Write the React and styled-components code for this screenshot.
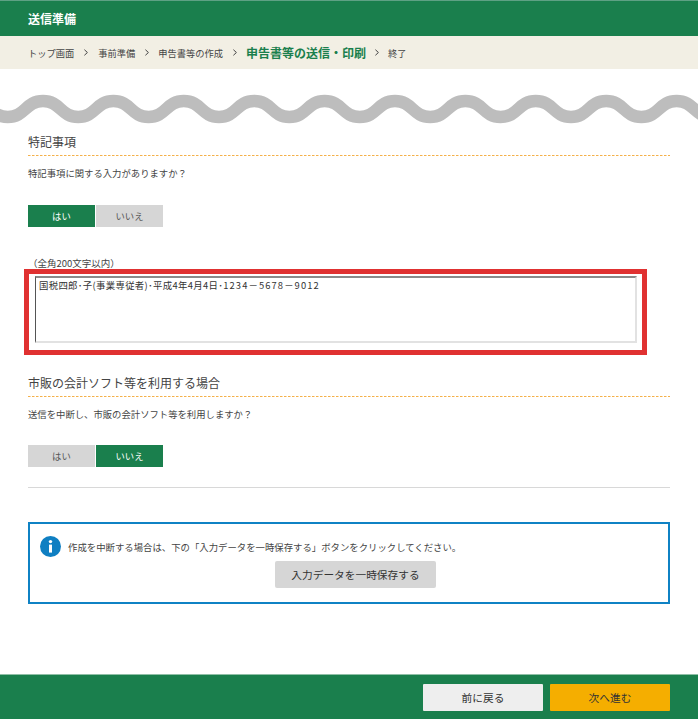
import React from "react";
import styled, { createGlobalStyle } from "styled-components";

const Global = createGlobalStyle`
  html, body { margin: 0; padding: 0; background: #fff; }
  body { font-family: "Noto Sans CJK JP", "Liberation Sans", sans-serif; color: #333; }
  * { box-sizing: border-box; }
`;

const Page = styled.div`
  width: 698px;
  height: 719px;
  display: flex;
  flex-direction: column;
  overflow: hidden;
`;
const Header = styled.header`
  height: 36px;
  flex: none;
  background: #1a7f4d;
  border-top: 1px solid #5ea184;
  padding-left: 28px;
  display: flex;
  align-items: center;
  color: #fff;
  font-size: 12px;
  font-weight: 700;
`;
const Crumbs = styled.nav`
  height: 33px;
  flex: none;
  background: #f2efe4;
  padding-left: 28px;
  display: flex;
  align-items: center;
  color: #444;
`;
const Crumb = styled.span`
  color: ${(p) => (p.$current ? "#1a7f4d" : "#444")};
  font-size: ${(p) => (p.$current ? "12px" : "9.25px")};
  font-weight: ${(p) => (p.$current ? 700 : 400)};
`;
const Sep = styled.svg`
  width: 4px;
  height: 7px;
  margin: 0 ${(p) => p.$gap}px;
  flex: none;
`;
const Wave = styled.svg`
  display: block;
  flex: none;
  width: 698px;
  height: 32px;
  margin-top: 24px;
`;
const Main = styled.main`
  flex: 1;
  padding: 7px 28px 0;
`;
const Heading = styled.h2`
  margin: 0;
  padding-top: 1px;
  font-size: 12px;
  font-weight: 400;
  line-height: 18px;
  height: 24px;
  color: #444;
  width: 642px;
  background: repeating-linear-gradient(90deg, #f4b04a 0 2px, #fbd9a4 2px 3px, #ffffff 3px 4px) left bottom / 100% 1px no-repeat;
`;
const Question = styled.p`
  margin: 10px 0 0;
  font-size: 9.35px;
  line-height: 14px;
  color: #444;
`;
const Toggle = styled.div`
  display: flex;
  gap: 1px;
  margin-top: ${(p) => p.$top}px;
`;
const ToggleButton = styled.button`
  width: 67px;
  height: 22px;
  padding: 0;
  border: 0;
  font: inherit;
  font-size: 9.4px;
  background: ${(p) => (p.$on ? "#1a7f4d" : "#d6d6d6")};
  color: ${(p) => (p.$on ? "#fff" : "#555")};
`;
const Limit = styled.div`
  margin-top: 30px;
  font-size: 9.5px;
  line-height: 12px;
  color: #444;
`;
const Highlight = styled.div`
  margin-left: -4px;
  width: 623px;
  height: 86px;
  border: 5px solid #e03131;
  padding: 2px 5px 7px 6px;
`;
const Memo = styled.div`
  width: 602px;
  height: 67px;
  border-style: solid;
  border-width: 2px 2px 2px 1px;
  border-color: #8a8a8a #e2e2e2 #e2e2e2 #555;
  padding: 1px 3px;
  font-size: 9.4px;
  line-height: 13px;
  letter-spacing: 0.33px;
  color: #333;
`;
const Phone = styled.span`
  letter-spacing: 1.1px;
`;
const Section2 = styled.section`
  margin-top: 18px;
`;
const Rule = styled.hr`
  width: 642px;
  margin: 20px 0 0;
  border: 0;
  border-top: 1px solid #d8d8d8;
`;
const InfoBox = styled.div`
  width: 642px;
  height: 82px;
  margin-top: 34px;
  border: 2px solid #0f82c4;
  padding: 12px 10px 0;
`;
const InfoRow = styled.div`
  display: flex;
  align-items: center;
  gap: 7px;
  font-size: 9.4px;
  color: #444;
`;
const SaveRow = styled.div`
  display: flex;
  justify-content: center;
  margin-top: 4px;
  padding-left: 13px;
`;
const SaveButton = styled.button`
  width: 161px;
  height: 27px;
  padding: 0;
  border: 0;
  border-radius: 2px;
  background: #d6d6d6;
  color: #333;
  font: inherit;
  font-size: 10.7px;
`;
const Footer = styled.footer`
  height: 45px;
  flex: none;
  background: #1a7f4d;
  border-top: 1px solid #8fbfa6;
  display: flex;
  justify-content: flex-end;
  align-items: center;
  gap: 7px;
  padding-right: 28px;
`;
const FooterButton = styled.button`
  width: 120px;
  height: 27px;
  padding: 0;
  border: 0;
  border-radius: 1px;
  font: inherit;
  font-size: 10.7px;
  color: #333;
  background: ${(p) => (p.$primary ? "#f5ae00" : "#eeeeee")};
`;

const Chevron = ({ gap }) => (
  <Sep $gap={gap} viewBox="0 0 4 7">
    <path d="M0.4 0.7L3.4 3.5L0.4 6.3" fill="none" stroke="#444" strokeWidth="1" />
  </Sep>
);

function wavePath() {
  const period = 70.4;
  const start = 43 - period * 2;
  let d = `M${start} 8`;
  for (let x = start; x < 760; x += period) {
    d += ` C${x + period * 0.25} 8 ${x + period * 0.25} 24 ${x + period * 0.5} 24`;
    d += ` C${x + period * 0.75} 24 ${x + period * 0.75} 8 ${x + period} 8`;
  }
  return d;
}

export default function App() {
  return (
    <Page>
      <Global />
      <Header>送信準備</Header>
      <Crumbs>
        <Crumb>トップ画面</Crumb>
        <Chevron gap={10} />
        <Crumb>事前準備</Crumb>
        <Chevron gap={9.5} />
        <Crumb>申告書等の作成</Crumb>
        <Chevron gap={9.5} />
        <Crumb $current>申告書等の送信・印刷</Crumb>
        <Chevron gap={9} />
        <Crumb>終了</Crumb>
      </Crumbs>
      <Wave viewBox="0 0 698 32">
        <path d={wavePath()} fill="none" stroke="#bdbdbd" strokeWidth="12.5" />
      </Wave>
      <Main>
        <section>
          <Heading>特記事項</Heading>
          <Question>特記事項に関する入力がありますか？</Question>
          <Toggle $top={25}>
            <ToggleButton $on>はい</ToggleButton>
            <ToggleButton>いいえ</ToggleButton>
          </Toggle>
          <Limit>（全角200文字以内）</Limit>
          <Highlight>
            <Memo>
              国税四郎･子(事業専従者)･平成4年4月4日･<Phone>1234－5678－9012</Phone>
            </Memo>
          </Highlight>
        </section>
        <Section2>
          <Heading>市販の会計ソフト等を利用する場合</Heading>
          <Question>送信を中断し、市販の会計ソフト等を利用しますか？</Question>
          <Toggle $top={24}>
            <ToggleButton>はい</ToggleButton>
            <ToggleButton $on>いいえ</ToggleButton>
          </Toggle>
          <Rule />
        </Section2>
        <InfoBox>
          <InfoRow>
            <svg width="21" height="21" viewBox="0 0 21 21">
              <circle cx="10.5" cy="10.5" r="10.5" fill="#0f7fc2" />
              <circle cx="10.5" cy="5.6" r="1.7" fill="#fff" />
              <rect x="9" y="8.6" width="3" height="8" fill="#fff" />
            </svg>
            作成を中断する場合は、下の「入力データを一時保存する」ボタンをクリックしてください。
          </InfoRow>
          <SaveRow>
            <SaveButton>入力データを一時保存する</SaveButton>
          </SaveRow>
        </InfoBox>
      </Main>
      <Footer>
        <FooterButton>前に戻る</FooterButton>
        <FooterButton $primary>次へ進む</FooterButton>
      </Footer>
    </Page>
  );
}
